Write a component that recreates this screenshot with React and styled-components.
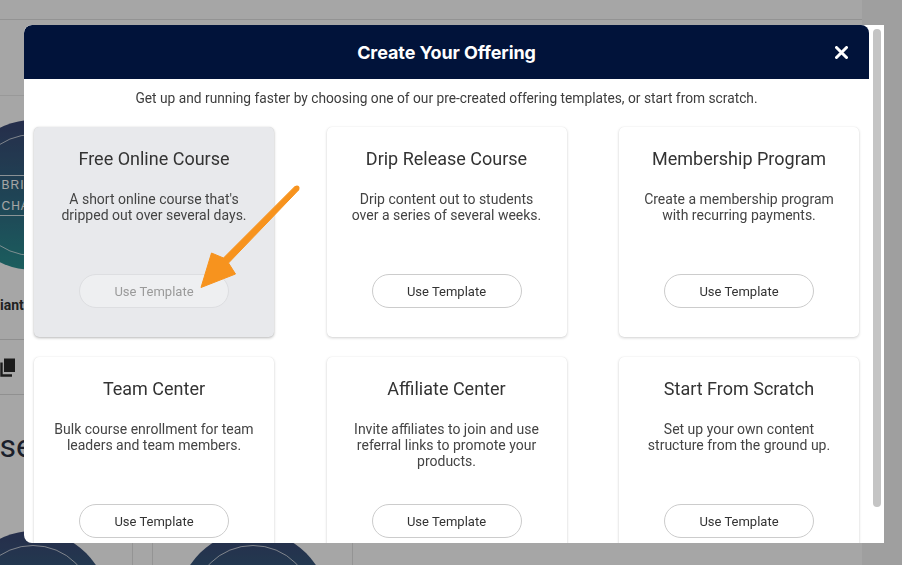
import React from "react";
import styled, { createGlobalStyle, css } from "styled-components";

const GlobalStyle = createGlobalStyle`
  html, body { margin: 0; padding: 0; overflow: hidden; }
  body {
    background: #f4f4f4;
    font-family: Roboto, "Noto Sans", "Liberation Sans", sans-serif;
    -webkit-font-smoothing: antialiased;
  }
  * { box-sizing: border-box; }
`;

/* ---------- background page ---------- */
const Page = styled.div`
  width: 862px;
  height: 565px;
  background: #ffffff;
  overflow: hidden;
  display: flex;
  flex-direction: column;
`;

const TopBar = styled.div`
  height: 20px;
  flex: none;
  border-bottom: 1px solid #e2e2e2;
`;

const Main = styled.div`
  margin-left: -68px;
  padding-top: 75px;
  display: flex;
  flex-direction: column;
`;

const ProgramCard = styled.div`
  width: 201px;
  border-top: 1px solid #ececec;
  border-bottom: 1px solid #dedede;
  display: flex;
  flex-direction: column;
  align-items: center;
  padding-top: 24px;
`;

const Cover = styled.div`
  width: 150px;
  height: 150px;
  border-radius: 50%;
  background: linear-gradient(180deg, #3b4774 0%, #2f6f86 60%, #2a9191 100%);
  position: relative;
  display: flex;
  flex-direction: column;
  align-items: center;
  justify-content: center;
  gap: 3px;
  flex: none;
`;

const Ring = styled.div`
  position: absolute;
  inset: 14px;
  border-radius: 50%;
  border: 1px solid rgba(255, 255, 255, 0.7);
`;

const CoverLine = styled.div`
  font-family: "Liberation Sans", Arial, sans-serif;
  font-size: 12px;
  letter-spacing: 1px;
  color: #ffffff;
  padding: 2px 0 2px 31px;
  width: 124px;
  text-align: left;
  white-space: nowrap;
  border-top: ${(p) => (p.$top ? "1px solid rgba(255,255,255,0.8)" : "none")};
  border-bottom: ${(p) => (p.$bottom ? "1px solid rgba(255,255,255,0.8)" : "none")};
`;

const ProgramTitle = styled.div`
  margin-top: 27px;
  font-size: 14px;
  font-weight: 700;
  color: #333;
  white-space: nowrap;
`;

const IconRow = styled.div`
  margin-top: 26px;
  width: 100%;
  border-top: 1px solid #dcdcdc;
  height: 55px;
  display: flex;
  align-items: center;
  justify-content: flex-start;
  gap: 40px;
  padding-left: 68px;
`;

const Heading = styled.div`
  margin-top: 31px;
  font-size: 32px;
  line-height: 40px;
  color: #2a3142;
  white-space: nowrap;
`;

const BottomGrid = styled.div`
  margin-top: 45px;
  display: grid;
  grid-template-columns: repeat(4, 201px);
  gap: 19px;
`;

const BottomCard = styled.div`
  height: 200px;
  border-left: 1px solid #e3e3e3;
  border-right: 1px solid #e3e3e3;
  display: flex;
  justify-content: center;
  padding-top: 20px;
`;

/* ---------- modal ---------- */
const Overlay = styled.div`
  position: fixed;
  inset: 0;
  background: rgba(0, 0, 0, 0.35);
  padding: 25px 0 0 24px;
`;

const Modal = styled.div`
  width: 860px;
  height: 518px;
  background: #ffffff;
  border-radius: 8px 0 0 8px;
  overflow: hidden;
  display: flex;
`;

const ModalContent = styled.div`
  width: 845px;
  flex: none;
  overflow: hidden;
`;

const ScrollTrack = styled.div`
  width: 15px;
  flex: none;
  background: #ffffff;
  padding: 4px 3px 36px 4px;
  display: flex;
`;

const ScrollThumb = styled.div`
  flex: 1;
  border-radius: 4px;
  background: #c4c4c4;
`;

const Header = styled.div`
  height: 54px;
  background: #01133a;
  border-radius: 8px 8px 0 0;
  display: grid;
  grid-template-columns: 1fr auto 1fr;
  align-items: center;
`;

const Title = styled.h1`
  grid-column: 2;
  margin: 0;
  font-family: Inter, "Open Sans", sans-serif;
  font-size: 18px;
  font-weight: 700;
  color: #ffffff;
  letter-spacing: -0.1px;
`;

const Close = styled.button`
  grid-column: 3;
  justify-self: end;
  margin-right: 20px;
  background: none;
  border: 0;
  padding: 0;
  width: 16px;
  height: 16px;
  display: flex;
  align-items: center;
  justify-content: center;
  cursor: pointer;
`;

const Body = styled.div`
  padding: 11px 10px 10px;
`;

const Subtitle = styled.p`
  margin: 0;
  text-align: center;
  font-size: 13.75px;
  line-height: 16px;
  color: #3d3d3d;
`;

const Grid = styled.div`
  margin-top: 21px;
  display: grid;
  grid-template-columns: repeat(3, 240px);
  justify-content: space-between;
  row-gap: 20px;
`;

const Card = styled.div`
  height: 210px;
  border-radius: 5px;
  background: #ffffff;
  box-shadow: 0 1px 3px rgba(0, 0, 0, 0.18), 0 0 1px rgba(0, 0, 0, 0.12);
  display: flex;
  flex-direction: column;
  align-items: center;
  padding: 20px 19px 29px;
  ${(p) =>
    p.$active &&
    css`
      background: #e8e9ec;
      box-shadow: 0 1px 3px rgba(0, 0, 0, 0.28), 0 0 1px rgba(0, 0, 0, 0.15);
    `}
`;

const CardTitle = styled.h2`
  margin: 0;
  font-size: 18px;
  line-height: 24px;
  font-weight: 400;
  color: #333333;
  white-space: nowrap;
`;

const CardText = styled.p`
  margin: 20px 0 0;
  font-size: 14px;
  line-height: 16px;
  color: #444444;
  text-align: center;
`;

const TemplateButton = styled.button`
  margin-top: auto;
  width: 150px;
  height: 34px;
  flex: none;
  border-radius: 17px;
  border: 1px solid #cccccc;
  background: #ffffff;
  font-family: Roboto, "Noto Sans", sans-serif;
  font-size: 13px;
  color: #333333;
  cursor: pointer;
  ${(p) =>
    p.$active &&
    css`
      background: #eeeff1;
      border-color: #dddee1;
      color: #9a9a9a;
    `}
`;

const ArrowLayer = styled.svg`
  position: fixed;
  left: 0;
  top: 0;
  width: 902px;
  height: 565px;
  pointer-events: none;
`;

const templates = [
  {
    title: "Free Online Course",
    text: "A short online course that's dripped out over several days.",
    active: true,
  },
  {
    title: "Drip Release Course",
    text: "Drip content out to students over a series of several weeks.",
  },
  {
    title: "Membership Program",
    text: "Create a membership program with recurring payments.",
  },
  {
    title: "Team Center",
    text: "Bulk course enrollment for team leaders and team members.",
  },
  {
    title: "Affiliate Center",
    text: "Invite affiliates to join and use referral links to promote your products.",
  },
  {
    title: "Start From Scratch",
    text: "Set up your own content structure from the ground up.",
  },
];

const CopyIcon = () => (
  <svg width="16" height="19" viewBox="0 0 16 19">
    <path d="M1.5 4.5 V17.5 H12" fill="none" stroke="#2c2c2c" strokeWidth="2.4" />
    <rect x="4" y="0.5" width="11" height="13.5" fill="#2c2c2c" />
  </svg>
);

export default function App() {
  return (
    <>
      <GlobalStyle />
      <Page>
        <TopBar />
        <Main>
          <ProgramCard>
            <Cover>
              <Ring />
              <CoverLine $top>BRILLIANT</CoverLine>
              <CoverLine $bottom>CHALLENGE</CoverLine>
            </Cover>
            <ProgramTitle>Brilliant Challenge</ProgramTitle>
            <IconRow>
              <CopyIcon />
            </IconRow>
          </ProgramCard>
          <Heading>Courses</Heading>
          <BottomGrid>
            <BottomCard>
              <Cover>
                <Ring />
              </Cover>
            </BottomCard>
            <BottomCard>
              <Cover>
                <Ring />
              </Cover>
            </BottomCard>
          </BottomGrid>
        </Main>
      </Page>

      <Overlay>
        <Modal>
          <ModalContent>
            <Header>
              <Title>Create Your Offering</Title>
              <Close aria-label="Close">
                <svg width="13" height="13" viewBox="0 0 13 13">
                  <path
                    d="M1.5 1.5 L11.5 11.5 M11.5 1.5 L1.5 11.5"
                    stroke="#ffffff"
                    strokeWidth="3"
                    strokeLinecap="round"
                  />
                </svg>
              </Close>
            </Header>
            <Body>
              <Subtitle>
                Get up and running faster by choosing one of our pre-created offering templates, or
                start from scratch.
              </Subtitle>
              <Grid>
                {templates.map((t) => (
                  <Card key={t.title} $active={t.active}>
                    <CardTitle>{t.title}</CardTitle>
                    <CardText>{t.text}</CardText>
                    <TemplateButton $active={t.active}>Use Template</TemplateButton>
                  </Card>
                ))}
              </Grid>
            </Body>
          </ModalContent>
          <ScrollTrack>
            <ScrollThumb />
          </ScrollTrack>
        </Modal>
      </Overlay>

      <ArrowLayer viewBox="0 0 902 565">
        <polygon
          points="295.2,186.2 223.5,258 211.5,253 201,287.5 235.5,274 228.5,263 298.8,189.8"
          fill="#f7931e"
          strokeLinejoin="round"
          stroke="#f7931e"
          strokeWidth="1"
        />
        <circle cx="297" cy="188" r="2.5" fill="#f7931e" />
      </ArrowLayer>
    </>
  );
}
